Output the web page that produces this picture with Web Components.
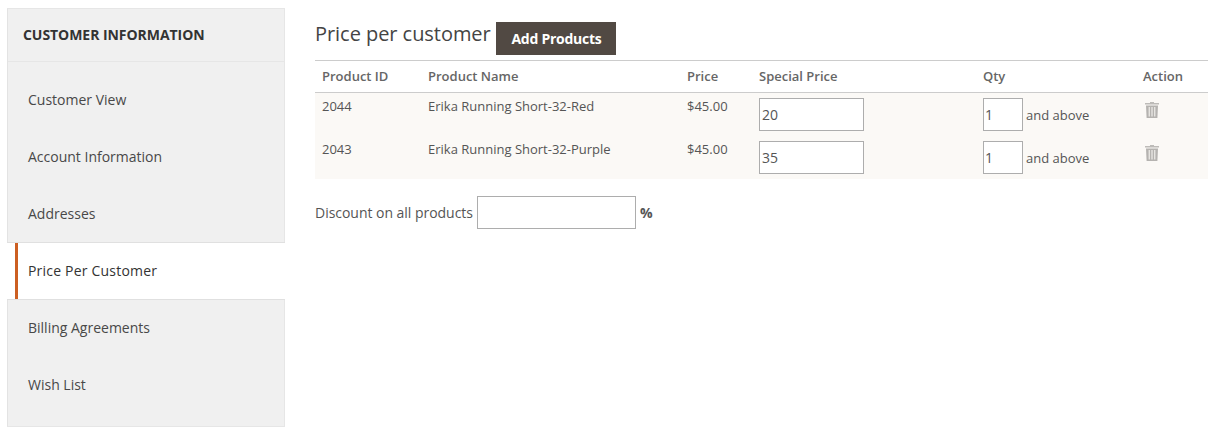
<!DOCTYPE html>
<html>
<head>
<meta charset="utf-8">
<title>Price per customer</title>
<style>
  html, body { margin: 0; background: #fff; }
  body { font-family: "Open Sans", sans-serif; color: #333; }
  customer-page { width: 1209px; height: 433px; }
</style>
</head>
<body>
<customer-page>
  <customer-sidebar slot="side" heading="CUSTOMER INFORMATION">
    <side-link>Customer View</side-link>
    <side-link>Account Information</side-link>
    <side-link>Addresses</side-link>
    <side-link active>Price Per Customer</side-link>
    <side-link>Billing Agreements</side-link>
    <side-link>Wish List</side-link>
  </customer-sidebar>
  <price-panel>
    <price-row product-id="2044" name="Erika Running Short-32-Red" price="$45.00" special="20" qty="1"></price-row>
    <price-row product-id="2043" name="Erika Running Short-32-Purple" price="$45.00" special="35" qty="1"></price-row>
  </price-panel>
</customer-page>

<script>
// Mise en page générale : barre latérale + contenu
class CustomerPage extends HTMLElement {
    constructor() {
        super();
        this.attachShadow({ mode: 'open' });
        this.shadowRoot.innerHTML = `
            <style>
                :host {
                    display: flex;
                    box-sizing: border-box;
                    padding: 8px 1px 6px 7px;
                    gap: 30px;
                }
            </style>
            <slot name="side"></slot>
            <slot></slot>
        `;
    }
}

class CustomerSidebar extends HTMLElement {
    constructor() {
        super();
        this.attachShadow({ mode: 'open' });
    }

    connectedCallback() {
        this.shadowRoot.innerHTML = `
            <style>
                :host {
                    display: flex;
                    flex-direction: column;
                    box-sizing: border-box;
                    width: 278px;
                    height: 419px;
                    background: #f0f0f0;
                    border: 1px solid #e6e6e6;
                    border-left-color: #e3e3e3;
                }
                h2 {
                    margin: 0;
                    box-sizing: border-box;
                    height: 53px;
                    padding: 0 0 2px 15px;
                    display: flex;
                    align-items: center;
                    font-size: 14px;
                    font-weight: 700;
                    letter-spacing: -0.05px;
                    color: #333;
                    border-bottom: 1px solid #e6e6e6;
                }
                nav {
                    display: flex;
                    flex-direction: column;
                    padding-top: 9px;
                }
            </style>
            <h2>${this.getAttribute('heading')}</h2>
            <nav><slot></slot></nav>
        `;
    }
}

class SideLink extends HTMLElement {
    constructor() {
        super();
        this.attachShadow({ mode: 'open' });
        this.shadowRoot.innerHTML = `
            <style>
                :host {
                    display: flex;
                    align-items: center;
                    box-sizing: border-box;
                    height: 57px;
                    padding-left: 20px;
                    font-size: 14px;
                    color: #484848;
                }
                :host([active]) {
                    height: 58px;
                    margin: 0 -1px -1px;
                    padding: 0 0 1px 21px;
                    color: #333;
                    font-weight: 500;
                    letter-spacing: 0.2px;
                    border-top: 1px solid #e0e0e0;
                    border-bottom: 1px solid #e0e0e0;
                    /* la barre orange est décalée de 8px dans la zone blanche */
                    background: linear-gradient(#cc5f22, #cc5f22) 8px 0 / 3px 100% no-repeat #fff;
                    background-origin: border-box;
                    position: relative;
                }
            </style>
            <slot></slot>
        `;
    }
}

class PricePanel extends HTMLElement {
    constructor() {
        super();
        this.attachShadow({ mode: 'open' });
        this.shadowRoot.innerHTML = `
            <style>
                :host {
                    display: block;
                    flex: 1;
                    font-size: 13px;
                    color: #555;
                }
                .title {
                    display: flex;
                    align-items: flex-start;
                    height: 52px;
                }
                h1 {
                    margin: 11px 0 0 0;
                    width: 181px;
                    white-space: nowrap;
                    font-size: 20px;
                    font-weight: 400;
                    line-height: 30px;
                    letter-spacing: -0.05px;
                    color: #444;
                }
                button {
                    margin-top: 14px;
                    width: 120px;
                    height: 33px;
                    border: 0;
                    padding: 0 0 0 1px;
                    background: #514943;
                    color: #fff;
                    font: 700 14px "Open Sans", sans-serif;
                    letter-spacing: -0.25px;
                }
                .grid {
                    display: grid;
                    grid-template-columns: 106px 259px 72px 224px 160px 72px;
                }
                .head {
                    height: 31px;
                    border-top: 1px solid #ccc;
                    border-bottom: 1px solid #ccc;
                    align-items: center;
                    font-weight: 600;
                    color: #666;
                }
                .head span { padding: 0 0 2px 7px; }
                .rows { background: #fbf9f6; }
                .discount {
                    display: flex;
                    align-items: center;
                    gap: 4px;
                    margin-top: 17px;
                    font-size: 14px;
                }
                .discount span { width: 158px; white-space: nowrap; letter-spacing: -0.03px; }
                .discount input {
                    box-sizing: border-box;
                    width: 159px;
                    height: 33px;
                    border: 1px solid #adadad;
                    background: #fff;
                    padding: 0;
                }
                .discount b { font-size: 14px; color: #555; }
            </style>
            <div class="title">
                <h1>Price per customer</h1>
                <button type="button">Add Products</button>
            </div>
            <div class="grid head">
                <span>Product ID</span><span>Product Name</span><span>Price</span>
                <span>Special Price</span><span>Qty</span><span>Action</span>
            </div>
            <div class="rows"><slot></slot></div>
            <div class="discount">
                <span>Discount on all products</span>
                <input type="text" aria-label="Discount on all products">
                <b>%</b>
            </div>
        `;
    }
}

class PriceRow extends HTMLElement {
    constructor() {
        super();
        this.attachShadow({ mode: 'open' });
    }

    connectedCallback() {
        const get = (name) => this.getAttribute(name);
        this.shadowRoot.innerHTML = `
            <style>
                :host {
                    display: grid;
                    grid-template-columns: 106px 259px 72px 224px 160px 72px;
                    box-sizing: border-box;
                    height: 43px;
                    font-size: 13px;
                    color: #555;
                }
                .txt { padding: 4px 0 0 7px; line-height: 18px; }
                .cell { padding: 5px 0 0 7px; display: flex; align-items: flex-start; }
                input {
                    box-sizing: border-box;
                    height: 33px;
                    border: 1px solid #adadad;
                    background: #fff;
                    padding: 0 0 0 2px;
                    margin: 0;
                    font: 14px "Open Sans", sans-serif;
                    color: #555;
                }
                .special { width: 105px; }
                .qty { width: 40px; margin-right: 3px; padding-left: 1px; }
                .above { line-height: 35px; }
                svg { display: block; margin: 4px 0 0 2px; }
            </style>
            <span class="txt">${get('product-id')}</span>
            <span class="txt">${get('name')}</span>
            <span class="txt">${get('price')}</span>
            <span class="cell"><input class="special" type="text" value="${get('special')}"></span>
            <span class="cell"><input class="qty" type="text" value="${get('qty')}"><span class="above">and above</span></span>
            <span class="cell">
                <svg width="14" height="16" viewBox="0 0 14 16" aria-label="Delete">
                    <path fill="#bdbbb8" d="M5 0h4v1h5v1.500H0V1h5z"/>
                    <path fill="#b5b3b0" fill-rule="evenodd" d="M1 3.500h12l-.6 12.500H1.600zM3.700 5v9.500h1V5zM6.500 5v9.500h1V5zM9.300 5v9.500h1V5z"/>
                </svg>
            </span>
        `;
    }
}

customElements.define('customer-page', CustomerPage);
customElements.define('customer-sidebar', CustomerSidebar);
customElements.define('side-link', SideLink);
customElements.define('price-panel', PricePanel);
customElements.define('price-row', PriceRow);
</script>
</body>
</html>
